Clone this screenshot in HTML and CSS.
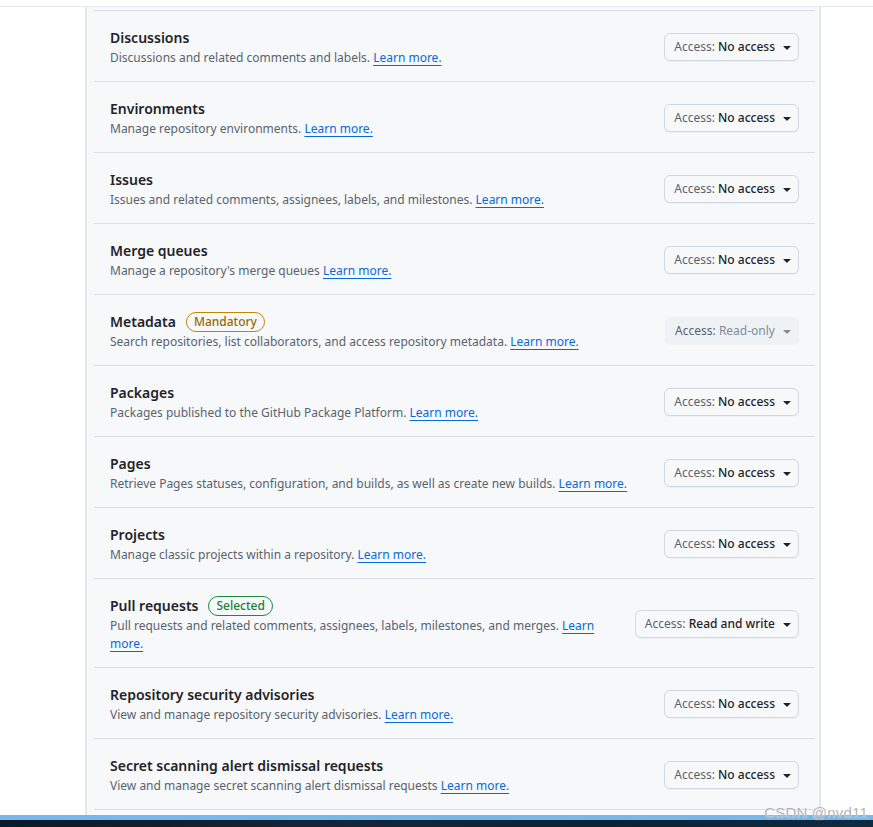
FILE: index.html
```html
<!DOCTYPE html>
<html lang="en">
<head>
<meta charset="utf-8">
<title>Permissions</title>
<link rel="stylesheet" href="styles.css">
</head>
<body>
<div class="topline"></div>
<div class="panel">
  <div class="row">
    <div class="info">
      <div class="title">Discussions</div>
      <div class="desc">Discussions and related comments and labels. <a href="#">Learn more.</a></div>
    </div>
    <button class="btn"><span class="lbl">Access:</span>&nbsp;<span class="val">No access</span><svg viewBox="0 0 16 16" width="16" height="16"><path d="m4.427 7.427 3.396 3.396a.25.25 0 0 0 .354 0l3.396-3.396A.25.25 0 0 0 11.396 7H4.604a.25.25 0 0 0-.177.427Z"/></svg></button>
  </div>
  <div class="row">
    <div class="info">
      <div class="title">Environments</div>
      <div class="desc">Manage repository environments. <a href="#">Learn more.</a></div>
    </div>
    <button class="btn"><span class="lbl">Access:</span>&nbsp;<span class="val">No access</span><svg viewBox="0 0 16 16" width="16" height="16"><path d="m4.427 7.427 3.396 3.396a.25.25 0 0 0 .354 0l3.396-3.396A.25.25 0 0 0 11.396 7H4.604a.25.25 0 0 0-.177.427Z"/></svg></button>
  </div>
  <div class="row">
    <div class="info">
      <div class="title">Issues</div>
      <div class="desc">Issues and related comments, assignees, labels, and milestones. <a href="#">Learn more.</a></div>
    </div>
    <button class="btn"><span class="lbl">Access:</span>&nbsp;<span class="val">No access</span><svg viewBox="0 0 16 16" width="16" height="16"><path d="m4.427 7.427 3.396 3.396a.25.25 0 0 0 .354 0l3.396-3.396A.25.25 0 0 0 11.396 7H4.604a.25.25 0 0 0-.177.427Z"/></svg></button>
  </div>
  <div class="row">
    <div class="info">
      <div class="title">Merge queues</div>
      <div class="desc">Manage a repository's merge queues <a href="#">Learn more.</a></div>
    </div>
    <button class="btn"><span class="lbl">Access:</span>&nbsp;<span class="val">No access</span><svg viewBox="0 0 16 16" width="16" height="16"><path d="m4.427 7.427 3.396 3.396a.25.25 0 0 0 .354 0l3.396-3.396A.25.25 0 0 0 11.396 7H4.604a.25.25 0 0 0-.177.427Z"/></svg></button>
  </div>
  <div class="row">
    <div class="info">
      <div class="title">Metadata <span class="badge badge-attention">Mandatory</span></div>
      <div class="desc">Search repositories, list collaborators, and access repository metadata. <a href="#">Learn more.</a></div>
    </div>
    <button class="btn btn-disabled"><span class="lbl">Access:</span>&nbsp;<span class="val">Read-only</span><svg viewBox="0 0 16 16" width="16" height="16"><path d="m4.427 7.427 3.396 3.396a.25.25 0 0 0 .354 0l3.396-3.396A.25.25 0 0 0 11.396 7H4.604a.25.25 0 0 0-.177.427Z"/></svg></button>
  </div>
  <div class="row">
    <div class="info">
      <div class="title">Packages</div>
      <div class="desc">Packages published to the GitHub Package Platform. <a href="#">Learn more.</a></div>
    </div>
    <button class="btn"><span class="lbl">Access:</span>&nbsp;<span class="val">No access</span><svg viewBox="0 0 16 16" width="16" height="16"><path d="m4.427 7.427 3.396 3.396a.25.25 0 0 0 .354 0l3.396-3.396A.25.25 0 0 0 11.396 7H4.604a.25.25 0 0 0-.177.427Z"/></svg></button>
  </div>
  <div class="row">
    <div class="info">
      <div class="title">Pages</div>
      <div class="desc">Retrieve Pages statuses, configuration, and builds, as well as create new builds. <a href="#">Learn more.</a></div>
    </div>
    <button class="btn"><span class="lbl">Access:</span>&nbsp;<span class="val">No access</span><svg viewBox="0 0 16 16" width="16" height="16"><path d="m4.427 7.427 3.396 3.396a.25.25 0 0 0 .354 0l3.396-3.396A.25.25 0 0 0 11.396 7H4.604a.25.25 0 0 0-.177.427Z"/></svg></button>
  </div>
  <div class="row">
    <div class="info">
      <div class="title">Projects</div>
      <div class="desc">Manage classic projects within a repository. <a href="#">Learn more.</a></div>
    </div>
    <button class="btn"><span class="lbl">Access:</span>&nbsp;<span class="val">No access</span><svg viewBox="0 0 16 16" width="16" height="16"><path d="m4.427 7.427 3.396 3.396a.25.25 0 0 0 .354 0l3.396-3.396A.25.25 0 0 0 11.396 7H4.604a.25.25 0 0 0-.177.427Z"/></svg></button>
  </div>
  <div class="row">
    <div class="info info-narrow">
      <div class="title">Pull requests <span class="badge badge-success">Selected</span></div>
      <div class="desc">Pull requests and related comments, assignees, labels, milestones, and merges. <a href="#">Learn more.</a></div>
    </div>
    <button class="btn"><span class="lbl">Access:</span>&nbsp;<span class="val">Read and write</span><svg viewBox="0 0 16 16" width="16" height="16"><path d="m4.427 7.427 3.396 3.396a.25.25 0 0 0 .354 0l3.396-3.396A.25.25 0 0 0 11.396 7H4.604a.25.25 0 0 0-.177.427Z"/></svg></button>
  </div>
  <div class="row">
    <div class="info">
      <div class="title">Repository security advisories</div>
      <div class="desc">View and manage repository security advisories. <a href="#">Learn more.</a></div>
    </div>
    <button class="btn"><span class="lbl">Access:</span>&nbsp;<span class="val">No access</span><svg viewBox="0 0 16 16" width="16" height="16"><path d="m4.427 7.427 3.396 3.396a.25.25 0 0 0 .354 0l3.396-3.396A.25.25 0 0 0 11.396 7H4.604a.25.25 0 0 0-.177.427Z"/></svg></button>
  </div>
  <div class="row">
    <div class="info">
      <div class="title">Secret scanning alert dismissal requests</div>
      <div class="desc">View and manage secret scanning alert dismissal requests <a href="#">Learn more.</a></div>
    </div>
    <button class="btn"><span class="lbl">Access:</span>&nbsp;<span class="val">No access</span><svg viewBox="0 0 16 16" width="16" height="16"><path d="m4.427 7.427 3.396 3.396a.25.25 0 0 0 .354 0l3.396-3.396A.25.25 0 0 0 11.396 7H4.604a.25.25 0 0 0-.177.427Z"/></svg></button>
  </div>
  <div class="row-end"></div>
</div>
<div class="taskbar"></div>
<div class="watermark">CSDN @nvd11</div>
</body>
</html>
```

FILE: styles.css
```css
* { box-sizing: border-box; }
html, body { margin: 0; padding: 0; }
body {
  background: #ffffff;
  font-family: "Noto Sans", "Open Sans", sans-serif;
  color: #1f2328;
  width: 873px;
  height: 827px;
  overflow: hidden;
  position: relative;
}
.topline {
  height: 7px;
  border-bottom: 1px solid #e6e9ed;
}
.panel {
  margin-left: 85px;
  width: 736px;
  background: #f6f8fa;
  border-left: 2px solid #e3e7eb;
  border-right: 2px solid #e3e7eb;
  padding: 3px 4px 0 7px;
}
.row {
  display: flex;
  align-items: center;
  justify-content: space-between;
  border-top: 1px solid #d8dee4;
  padding: 17px 16px 14px 16px;
  gap: 24px;
}
.info { flex: 1; min-width: 0; }
.info-narrow { max-width: 500px; }
.title {
  font-size: 14px;
  font-weight: 600;
  line-height: 20px;
  color: #1f2328;
  display: flex;
  align-items: center;
}
.desc {
  font-size: 12px;
  line-height: 18px;
  margin-top: 1px;
  color: #59636e;
}
.desc a {
  color: #0969da;
  text-decoration: underline;
  text-underline-offset: 3px;
}
.badge {
  display: inline-flex;
  align-items: center;
  height: 20px;
  padding: 0 7px;
  margin-left: 10px;
  border: 1px solid;
  border-radius: 2em;
  font-size: 12px;
  font-weight: 500;
}
.badge-attention { color: #9a6700; border-color: #bf8700; }
.badge-success { color: #1a7f37; border-color: #1f883d; }
.btn {
  flex: none;
  display: inline-flex;
  align-items: center;
  height: 28px;
  margin-top: -1px;
  padding: 0 3px 0 9px;
  background: #f6f8fa;
  border: 1px solid #d1d9e0;
  border-radius: 6px;
  font-family: inherit;
  font-size: 12px;
  line-height: 20px;
  color: #1f2328;
  box-shadow: 0 1px 0 rgba(31,35,40,0.04);
}
.btn .lbl { color: #59636e; }
.btn .val { font-weight: 500; color: #1f2328; }
.btn svg { margin-left: 4px; fill: #1f2328; }
.btn-disabled {
  background: #eff2f5;
  border-color: #eff2f5;
  box-shadow: none;
}
.btn-disabled .val { color: #818b98; font-weight: 400; }
.btn-disabled svg { fill: #818b98; }
.row-end {
  border-top: 1px solid #d8dee4;
  height: 6px;
}
.taskbar {
  height: 12px;
  border-top: 5px solid #74b8ef;
  background: linear-gradient(90deg, #0c1a28 0%, #13263a 40%, #0b2236 70%, #102a40 100%);
}
.watermark {
  position: absolute;
  right: 5px;
  bottom: 6px;
  font-family: "Liberation Sans", Arial, sans-serif;
  font-size: 15px;
  color: #b4b4b4;
  text-shadow: 0 0 1px #ffffff;
  letter-spacing: 0.2px;
}
```
